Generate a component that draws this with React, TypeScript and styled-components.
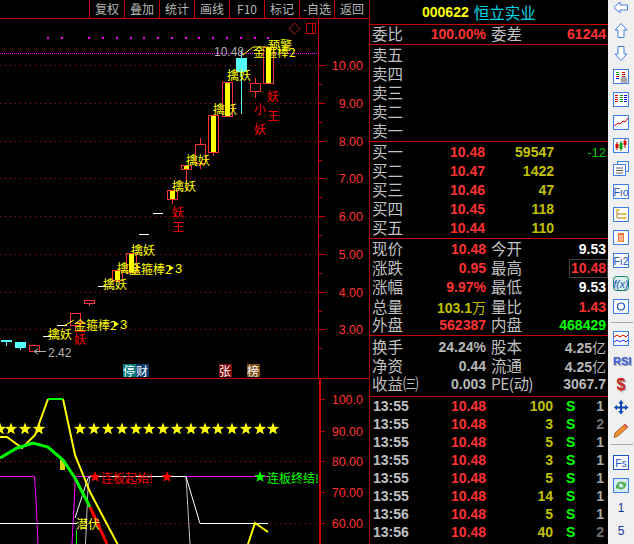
import React from 'react';
import styled, { createGlobalStyle } from 'styled-components';

const RED = '#ff3232';
const LINE = '#c80000';
const YELLOW = '#ffff00';
const CYAN = '#54ffff';
const GREEN = '#00ff00';
const MAGENTA = '#ff00ff';
const CJK = '"Noto Sans CJK SC", "Liberation Sans", sans-serif';
const NUM = '"Liberation Sans", "Noto Sans CJK SC", sans-serif';

const GlobalStyle = createGlobalStyle`
  html, body {
    margin: 0;
    padding: 0;
    background: #000;
    overflow: hidden;
  }
`;

const Screen = styled.div`
  display: flex;
  width: 634px;
  height: 544px;
  overflow: hidden;
  background: #000;
`;

/* ---------- left column ---------- */

const ChartColumn = styled.div`
  display: flex;
  flex-direction: column;
  width: 369px;
  flex: none;
`;

const Toolbar = styled.div`
  display: flex;
  justify-content: flex-end;
  height: 18px;
  flex: none;
  border-bottom: 1px solid ${LINE};
`;

const ToolButton = styled.div`
  width: 35px;
  box-sizing: border-box;
  border-left: 1px solid ${LINE};
  color: #b8b8b8;
  font: 12px/17px ${CJK};
  text-align: center;
  white-space: nowrap;
`;

const ChartSvg = styled.svg`
  display: block;
  flex: none;
`;

const MainSvg = styled(ChartSvg)`
  border-bottom: 1px solid ${LINE};
`;

const Label = styled.text<{ $color?: string; $size?: number; $num?: boolean }>`
  fill: ${(p) => p.$color || YELLOW};
  font-family: ${(p) => (p.$num ? NUM : CJK)};
  font-size: ${(p) => p.$size || 12}px;
  dominant-baseline: central;
`;

const Candle = ({ x, top, bottom, fill, wickTop, wickBottom }: any) => (
  <g shapeRendering="crispEdges">
    {(wickTop || wickBottom) && (
      <line
        x1={x + 5.5}
        x2={x + 5.5}
        y1={wickTop || top}
        y2={wickBottom || bottom}
        stroke={fill === CYAN ? CYAN : RED}
      />
    )}
    {fill === CYAN ? (
      <rect x={x} y={top} width={11} height={bottom - top} fill={CYAN} />
    ) : (
      <rect x={x + 0.5} y={top + 0.5} width={10} height={bottom - top - 1} fill="#000" stroke={RED} />
    )}
    {fill === YELLOW && <rect x={x + 3} y={top + 1} width={5} height={bottom - top - 2} fill={YELLOW} />}
  </g>
);

const candles = [
  { x: 263, top: 47, bottom: 84, fill: YELLOW },
  { x: 236, top: 58, bottom: 72, fill: CYAN, wickTop: 50, wickBottom: 114 },
  { x: 250, top: 83, bottom: 92, wickTop: 78, wickBottom: 98 },
  { x: 222, top: 82, bottom: 117, fill: YELLOW },
  { x: 208, top: 115, bottom: 153, fill: YELLOW, wickBottom: 156 },
  { x: 195, top: 144, bottom: 164, wickTop: 138, wickBottom: 169 },
  { x: 181, top: 165, bottom: 170, fill: YELLOW, wickBottom: 190 },
  { x: 167, top: 190, bottom: 200, fill: YELLOW, wickBottom: 204 },
  { x: 126, top: 253, bottom: 273, fill: YELLOW },
  { x: 112, top: 270, bottom: 281, fill: YELLOW },
  { x: 84, top: 300, bottom: 304, wickBottom: 306 },
  { x: 70, top: 313, bottom: 326, wickBottom: 330 },
  { x: 29, top: 345, bottom: 352 },
  { x: 15, top: 342, bottom: 348, fill: CYAN, wickBottom: 350 },
];

const dashes = [
  [153, 213],
  [139, 234],
  [98, 286],
  [57, 325],
  [43, 336],
];

const catchLabels = [
  [227, 74],
  [213, 108],
  [186, 159],
  [172, 185],
  [131, 249],
  [117, 267],
  [103, 283],
  [48, 333],
];

const redLabels: [string, number, number][] = [
  ['妖', 267, 95],
  ['王', 267, 115],
  ['小', 254, 108],
  ['妖', 254, 128],
  ['妖', 172, 211],
  ['王', 172, 226],
  ['王', 74, 326],
  ['妖', 74, 338],
];

const magentaDots = [48, 62, 89, 103, 117, 131, 144, 158, 172, 186, 199, 213, 227, 241, 255, 268];
const priceAxis: [string, number][] = [
  ['10.00', 65],
  ['9.00', 103],
  ['8.00', 141],
  ['7.00', 178],
  ['6.00', 216],
  ['5.00', 254],
  ['4.00', 292],
  ['3.00', 329],
];

const tagCells: [string, number, string][] = [
  ['停', 123, '#0a7a80'],
  ['财', 136, '#0c3a70'],
  ['张', 219, '#7a0808'],
  ['榜', 247, '#7a4a10'],
];

// "金箍棒2" + small arrow + "3", the way the chart overlays them
const RodLabel = ({ x, y }: { x: number; y: number }) => (
  <g>
    <Label x={x} y={y}>
      金箍棒2
    </Label>
    <polygon points={`${x + 40},${y - 3} ${x + 45},${y} ${x + 40},${y + 3}`} fill={YELLOW} />
    <Label x={x + 46} y={y} $num $size={13}>
      3
    </Label>
  </g>
);

const MainChart = () => (
  <MainSvg width={369} height={359} viewBox="0 19 369 359">
    <g shapeRendering="crispEdges">
      {priceAxis.map(([, y]) => (
        <g key={y}>
          <line x1={0} x2={318} y1={y + 0.5} y2={y + 0.5} stroke="#c01010" strokeDasharray="1 4" />
          <line x1={318} x2={325} y1={y + 0.5} y2={y + 0.5} stroke={LINE} />
          <line x1={318} x2={322} y1={y + 19.5} y2={y + 19.5} stroke={LINE} />
        </g>
      ))}
      <line x1={0} x2={318} y1={53.5} y2={53.5} stroke={MAGENTA} strokeDasharray="1 1" />
      <line x1={318.5} x2={318.5} y1={19} y2={378} stroke={LINE} />
      {magentaDots.map((x) => (
        <rect key={x} x={x - 1} y={37} width={2} height={2} fill={MAGENTA} />
      ))}
      <rect x={306.5} y={23.5} width={9} height={10} fill="none" stroke={LINE} />
      <line x1={312.5} x2={312.5} y1={23} y2={34} stroke={LINE} />
    </g>
    <polygon points="294.5,23 300,28.5 294.5,34 289,28.5" fill="none" stroke="#b02020" />

    {candles.map((c) => (
      <Candle key={c.x} {...c} />
    ))}
    <g shapeRendering="crispEdges">
      {dashes.map(([x, y]) => (
        <rect key={x} x={x} y={y} width={10} height={1} fill="#fff" />
      ))}
      <rect x={1} y={340} width={11} height={2} fill={CYAN} />
      <line x1={6.5} x2={6.5} y1={340} y2={346} stroke={CYAN} />
    </g>

    {catchLabels.map(([x, y]) => (
      <Label key={x} x={x} y={y}>
        擒妖
      </Label>
    ))}
    {redLabels.map(([t, x, y]) => (
      <Label key={`${t}${y}`} x={x} y={y} $color="#ff0000">
        {t}
      </Label>
    ))}

    <Label x={214} y={52} $color="#b0b0b0" $size={12} $num>
      10.48
    </Label>
    <polyline points="243,55 253,47 266,47" fill="none" stroke={YELLOW} />
    <Label x={253} y={51}>
      金箍棒2
    </Label>
    <Label x={268} y={44}>
      预警
    </Label>
    <RodLabel x={129} y={268} />
    <polyline points="64,326 74,320" fill="none" stroke={YELLOW} />
    <RodLabel x={74} y={324} />
    <line x1={34} x2={46} y1={351.5} y2={351.5} stroke="#b0b0b0" shapeRendering="crispEdges" />
    <polyline points="38,349 34,351.5 38,354" fill="none" stroke="#b0b0b0" />
    <Label x={48} y={353} $color="#b0b0b0" $num>
      2.42
    </Label>

    {tagCells.map(([t, x, bg]) => (
      <g key={t}>
        <rect x={x} y={364} width={13} height={13} fill={bg} shapeRendering="crispEdges" />
        <Label x={x} y={370.5} $color="#fff">
          {t}
        </Label>
      </g>
    ))}

    {priceAxis.map(([t, y]) => (
      <Label key={t} x={363} y={y + 1} $color={RED} $size={12.5} $num textAnchor="end">
        {t}
      </Label>
    ))}
  </MainSvg>
);

const starPath = (cx: number, cy: number, r: number) => {
  const pts = [];
  for (let i = 0; i < 10; i++) {
    const rad = i % 2 ? r * 0.42 : r;
    const a = (Math.PI / 5) * i - Math.PI / 2;
    pts.push(`${cx + rad * Math.cos(a)},${cy + rad * Math.sin(a)}`);
  }
  return pts.join(' ');
};

const starRow = [0, 11, 25, 39, 80, 94, 108, 122, 136, 149, 163, 177, 191, 205, 218, 232, 246, 260, 273];
const subAxis: [string, number][] = [
  ['100.0', 399],
  ['90.00', 431],
  ['80.00', 461],
  ['70.00', 492],
  ['60.00', 523],
];

const SubChart = () => (
  <ChartSvg width={369} height={165} viewBox="0 379 369 165">
    <defs>
      <clipPath id="subPlot">
        <rect x={0} y={379} width={318} height={165} />
      </clipPath>
    </defs>
    <g shapeRendering="crispEdges">
      <line x1={0} x2={318} y1={461.5} y2={461.5} stroke="#c01010" strokeDasharray="1 4" />
      <line x1={0} x2={318} y1={523.5} y2={523.5} stroke="#c01010" strokeDasharray="1 4" />
      {subAxis.map(([, y]) => (
        <line key={y} x1={319} x2={325} y1={y + 0.5} y2={y + 0.5} stroke={LINE} />
      ))}
      <rect x={319} y={379} width={2} height={165} fill={LINE} />
    </g>
    <g clipPath="url(#subPlot)" fill="none">
      <polyline points="0,476.5 34.5,476.5 36,500 38,544" stroke={MAGENTA} />
      <polyline points="72,544 75,486 75,476.5 268,476.5" stroke={MAGENTA} />
      <polyline points="85.5,544 88,488 90,476.5" stroke="#c0c0c0" />
      <polyline points="186,476.5 190,544" stroke="#c0c0c0" />
      <polyline points="75,518 88,478 90,476.5 186,476.5 200,523.5 268,523.5" stroke="#fff" />
      <polyline points="0,523.5 77,523.5" stroke="#fff" />
      <line x1={76.5} x2={76.5} y1={530} y2={544} stroke={GREEN} />
      <rect x={60} y={460} width={5} height={10} fill="#d8d800" shapeRendering="crispEdges" />
      <polyline points="0,437 7,437 22,448 35,435 48,399" stroke={YELLOW} strokeWidth={2} />
      <polyline points="63,399 75,455 90,492 118,545" stroke={YELLOW} strokeWidth={2} />
      <polyline points="48,399 63,399" stroke={GREEN} strokeWidth={2} />
      <polyline points="0,458 17,448 33,443 48,447 63,460 75,478 90,507" stroke={GREEN} strokeWidth={3} />
      <polyline points="90,507 107,544" stroke="#ff0000" strokeWidth={3} />
      <polyline points="248,544 255,523 268,532" stroke={YELLOW} strokeWidth={2} />
      {starRow.map((x) => (
        <polygon key={x} points={starPath(x, 429, 6.5)} fill={YELLOW} />
      ))}
      <polygon points={starPath(95, 477, 6)} fill="#ff0000" />
      <Label x={101} y={477} $color="#ff0000">
        连板起始!
      </Label>
      <polygon points={starPath(167, 477, 6)} fill="#ff0000" />
      <polygon points={starPath(260, 477, 6)} fill={GREEN} />
      <Label x={267} y={477} $color={GREEN}>
        连板终结!
      </Label>
      <Label x={76} y={523}>
        潜伏
      </Label>
    </g>
    {subAxis.map(([t, y]) => (
      <Label key={t} x={363} y={y + 1} $color={RED} $size={12.5} $num textAnchor="end">
        {t}
      </Label>
    ))}
  </ChartSvg>
);

/* ---------- quote panel ---------- */

const QuotePanel = styled.div`
  width: 239px;
  flex: none;
  box-sizing: border-box;
  border-left: 1px solid #a00000;
  display: flex;
  flex-direction: column;
  overflow: hidden;
`;

const Block = styled.div<{ $height: number; $flush?: boolean }>`
  height: ${(p) => p.$height}px;
  flex: none;
  box-sizing: border-box;
  padding-top: ${(p) => (p.$flush ? 0 : 1)}px;
  border-bottom: 1px solid ${LINE};
`;

const TitleBar = styled.div`
  height: 25px;
  flex: none;
  box-sizing: border-box;
  border-bottom: 1px solid ${LINE};
  display: flex;
  align-items: center;
  gap: 5px;
  padding-left: 52px;
`;

const StockCode = styled.span`
  color: ${YELLOW};
  font: bold 14px ${NUM};
`;

const StockName = styled.span`
  color: #00d8e8;
  font: 15.5px ${CJK};
`;

const QuoteRow = styled.div`
  display: grid;
  grid-template-columns: 32px 82px 5px 32px 1fr;
  align-items: center;
  height: 19px;
  padding: 0 2px;
`;

const BookRow = styled.div`
  display: grid;
  grid-template-columns: 32px 81px 69px 1fr;
  align-items: center;
  height: 19px;
  padding: 0 2px;
`;

const Caption = styled.span<{ $tight?: boolean }>`
  color: #c0c0c0;
  font: 15.5px/16px ${CJK};
  padding-bottom: 3px;
  white-space: nowrap;
  ${(p) => p.$tight && 'letter-spacing: -0.6px;'}
`;

const Value = styled.span<{ $color?: string; $boxed?: boolean; $thin?: boolean }>`
  color: ${(p) => p.$color || '#fff'};
  font: ${(p) => (p.$thin ? 'normal 13px' : 'bold 14px')}/17px ${NUM};
  justify-self: end;
  white-space: nowrap;
  ${(p) => p.$boxed && 'border: 1px solid #404040; padding: 0 1px; margin-right: -2px;'}
`;

const Unit = styled.span`
  font: 14px ${CJK};
`;

const TickList = styled.div`
  flex: 1;
  border-left: 1px solid #c80000;
  margin-left: -1px;
`;

const TickRow = styled.div`
  display: grid;
  grid-template-columns: 34px 79px 67px 21px 1fr;
  align-items: center;
  height: 18px;
  padding: 0 4px 0 3px;
`;

const TickTime = styled.span`
  color: #c0c0c0;
  font: bold 14px/17px ${NUM};
`;

const TickSide = styled.span`
  color: ${GREEN};
  font: bold 14px/17px ${NUM};
  padding-left: 13px;
`;

const sellRows = ['卖五', '卖四', '卖三', '卖二', '卖一'];
const buyRows = [
  ['买一', '10.48', '59547', '-12'],
  ['买二', '10.47', '1422', ''],
  ['买三', '10.46', '47', ''],
  ['买四', '10.45', '118', ''],
  ['买五', '10.44', '110', ''],
];
const DIM = '#c0c000';
const GREY = '#b8b8b8';
const ticks = [
  ['13:55', '100', '1'],
  ['13:55', '3', '2'],
  ['13:55', '5', '1'],
  ['13:55', '3', '1'],
  ['13:55', '5', '1'],
  ['13:55', '14', '1'],
  ['13:56', '5', '1'],
  ['13:56', '40', '2'],
];

const QuoteBoard = () => (
  <QuotePanel>
    <TitleBar>
      <StockCode>000622</StockCode>
      <StockName>恒立实业</StockName>
    </TitleBar>
    <Block $height={20} $flush>
      <QuoteRow>
        <Caption>委比</Caption>
        <Value $color={RED}>100.00%</Value>
        <span />
        <Caption>委差</Caption>
        <Value $color={RED}>61244</Value>
      </QuoteRow>
    </Block>
    <Block $height={97}>
      {sellRows.map((t) => (
        <BookRow key={t}>
          <Caption>{t}</Caption>
        </BookRow>
      ))}
    </Block>
    <Block $height={97}>
      {buyRows.map(([t, price, vol, delta]) => (
        <BookRow key={t}>
          <Caption>{t}</Caption>
          <Value $color={RED}>{price}</Value>
          <Value $color={DIM}>{vol}</Value>
          <Value $color="#00c800" $thin>
            {delta}
          </Value>
        </BookRow>
      ))}
    </Block>
    <Block $height={97}>
      <QuoteRow>
        <Caption>现价</Caption>
        <Value $color={RED}>10.48</Value>
        <span />
        <Caption>今开</Caption>
        <Value>9.53</Value>
      </QuoteRow>
      <QuoteRow>
        <Caption>涨跌</Caption>
        <Value $color={RED}>0.95</Value>
        <span />
        <Caption>最高</Caption>
        <Value $color={RED} $boxed>
          10.48
        </Value>
      </QuoteRow>
      <QuoteRow>
        <Caption>涨幅</Caption>
        <Value $color={RED}>9.97%</Value>
        <span />
        <Caption>最低</Caption>
        <Value>9.53</Value>
      </QuoteRow>
      <QuoteRow>
        <Caption>总量</Caption>
        <Value $color={DIM}>
          103.1<Unit>万</Unit>
        </Value>
        <span />
        <Caption>量比</Caption>
        <Value $color={RED}>1.43</Value>
      </QuoteRow>
      <QuoteRow>
        <Caption>外盘</Caption>
        <Value $color={RED}>562387</Value>
        <span />
        <Caption>内盘</Caption>
        <Value $color={GREEN}>468429</Value>
      </QuoteRow>
    </Block>
    <Block $height={61}>
      <QuoteRow>
        <Caption>换手</Caption>
        <Value $color={GREY}>24.24%</Value>
        <span />
        <Caption>股本</Caption>
        <Value $color={GREY}>
          4.25<Unit>亿</Unit>
        </Value>
      </QuoteRow>
      <QuoteRow>
        <Caption>净资</Caption>
        <Value $color={GREY}>0.44</Value>
        <span />
        <Caption>流通</Caption>
        <Value $color={GREY}>
          4.25<Unit>亿</Unit>
        </Value>
      </QuoteRow>
      <QuoteRow>
        <Caption>收益㈢</Caption>
        <Value $color={GREY}>0.003</Value>
        <span />
        <Caption $tight>PE(动)</Caption>
        <Value $color={GREY}>3067.7</Value>
      </QuoteRow>
    </Block>
    <TickList>
      {ticks.map(([time, vol, count], i) => (
        <TickRow key={i}>
          <TickTime>{time}</TickTime>
          <Value $color={RED}>10.48</Value>
          <Value $color={DIM}>{vol}</Value>
          <TickSide>S</TickSide>
          <Value $color={count === '1' ? '#a8a8a8' : '#707070'}>{count}</Value>
        </TickRow>
      ))}
    </TickList>
  </QuotePanel>
);

/* ---------- side toolbar ---------- */

const SideBar = styled.div`
  flex: 1;
  background: #f0f0f0;
  box-sizing: border-box;
  padding-left: 5px;
  display: flex;
  flex-direction: column;
  gap: 8px;
`;

const IconSvg = styled.svg`
  display: block;
  width: 16px;
  height: 15px;
  flex: none;
`;

const Divider = styled.div<{ $lift?: number }>`
  height: 1px;
  flex: none;
  width: 22px;
  margin: ${(p) => -(p.$lift || 0)}px 0 ${(p) => p.$lift || 0}px -2px;
  background: #a8a8a8;
`;

const GlyphSlot = styled.div<{ $color: string; $size: number }>`
  height: 15px;
  width: 16px;
  flex: none;
  text-align: center;
  color: ${(p) => p.$color};
  font: bold ${(p) => p.$size}px/15px ${NUM};
  text-shadow: 1px 1px 0 #a0a0a0;
`;

const NumberSlot = styled.div`
  height: 15px;
  width: 16px;
  flex: none;
  text-align: center;
  color: #0a3a9a;
  font: 12px/15px ${NUM};
`;

const BLUE = '#3f7fe8';

const IconText = styled.text<{ $italic?: boolean }>`
  fill: #1a50c0;
  font: ${(p) => (p.$italic ? 'italic ' : '')}10.5px ${NUM};
  dominant-baseline: central;
  text-anchor: middle;
`;

const Arrow = ({ points }: { points: string }) => (
  <IconSvg viewBox="0 0 16 15">
    <polygon points={points} fill="#fff" stroke={BLUE} strokeWidth={1} />
  </IconSvg>
);

const Framed = ({ children, color = BLUE, fill = '#fff' }: any) => (
  <IconSvg viewBox="0 0 16 15">
    <rect x={0.5} y={0.5} width={15} height={14} fill={fill} stroke={color} strokeWidth={1} shapeRendering="crispEdges" />
    {children}
  </IconSvg>
);

const Bars = ({ x, colors }: { x: number; colors: string[] }) => (
  <g shapeRendering="crispEdges">
    {colors.map((c, i) => (
      <rect key={i} x={x} y={3 + i * 2} width={3} height={1} fill={c} />
    ))}
  </g>
);

const Side = () => (
  <SideBar>
    <Arrow points="1,7.5 7,2 7,5 14.5,5 14.5,10 7,10 7,13" />
    <Arrow points="8,0.5 14,7 11,7 11,14.5 5,14.5 5,7 2,7" />
    <Arrow points="5,0.5 11,0.5 11,8 14,8 8,14.5 2,8 5,8" />
    <Framed>
      <Bars x={3} colors={['#00a000', '#00a000', '#e00000', '#0000e0']} />
      <Bars x={9} colors={['#e00000', '#e00000', '#e00000', '#e00000']} />
      <circle cx={11} cy={11} r={3.5} fill="#a8a8a8" />
    </Framed>
    <Framed>
      <Bars x={2} colors={['#e00000', '#e00000', '#e00000', '#e00000']} />
      <Bars x={6.5} colors={['#00a000', '#00a000', '#00a000', '#00a000']} />
      <Bars x={11} colors={['#0000e0', '#0000e0', '#0000e0', '#0000e0']} />
    </Framed>
    <Framed>
      <polyline points="1,11 5,8 7,9 10,6 12,7 15,3" fill="none" stroke="#e00000" />
    </Framed>
    <Framed>
      <line x1={4} x2={4} y1={4} y2={12} stroke="#800" />
      <rect x={2.5} y={6} width={3} height={4} fill="#e00000" />
      <line x1={8} x2={8} y1={3} y2={13} stroke="#060" />
      <rect x={6.5} y={5} width={3} height={6} fill="#00a000" />
      <line x1={12} x2={12} y1={1} y2={10} stroke="#800" />
      <rect x={10.5} y={3} width={3} height={4} fill="#e00000" />
    </Framed>
    <IconSvg viewBox="0 0 16 15">
      <rect x={4.5} y={0.5} width={11} height={10} fill="#fff" stroke={BLUE} />
      <rect x={0.5} y={3.5} width={12} height={11} fill="#fff" stroke={BLUE} />
      <path d="M3 7h7M3 9.5h7M3 12h7" stroke="#666" />
    </IconSvg>
    <Framed>
      <IconText x={8} y={8}>
        Fıo
      </IconText>
    </Framed>
    <Framed>
      <path d="M4 3v8h5M4 7h5" fill="none" stroke="#a08020" />
      <rect x={2.5} y={2} width={4} height={2} fill="#f0c040" />
      <rect x={8.5} y={6} width={5} height={2} fill="#f0c040" />
      <rect x={8.5} y={10} width={5} height={2} fill="#f0c040" />
    </Framed>
    <Framed>
      <path d="M5 3h6v9H5z" fill="#f07830" />
      <path d="M6 6h4M6 8h4M6 10h4" stroke="#fff" />
    </Framed>
    <Framed>
      <IconText x={8} y={8}>
        Fı2
      </IconText>
    </Framed>
    <IconSvg viewBox="0 0 16 15">
      <rect x={0.5} y={0.5} width={15} height={14} rx={3} fill="#d8f0e8" stroke="#108070" />
      <IconText x={8} y={7.5} $italic>
        f(x)
      </IconText>
    </IconSvg>
    <Framed>
      <circle cx={8} cy={7.5} r={3.5} fill="none" stroke="#1a50c0" strokeWidth={1.2} />
    </Framed>
    <Divider />
    <Framed>
      <polyline points="1,6 4,4 7,6 10,4 13,6 15,4" fill="none" stroke="#e00000" />
      <polyline points="1,11 4,9 7,11 10,9 13,11 15,9" fill="none" stroke="#2020e0" />
    </Framed>
    <GlyphSlot $color="#3a5ae0" $size={11}>
      RSI
    </GlyphSlot>
    <GlyphSlot $color="#d02020" $size={16}>
      $
    </GlyphSlot>
    <IconSvg viewBox="0 0 16 15">
      <path d="M7 3.5h2v3h3v-1.8l3.5 2.8-3.5 2.8v-1.8h-3v2.5h1.8l-2.8 3.5-2.8-3.5h1.8v-2.5h-3v1.8l-3-2.8 3-2.8v1.8h3v-3h-1.8l2.8-3.5 2.8 3.5z" fill="#0a48b8" />
    </IconSvg>
    <IconSvg viewBox="0 0 16 15">
      <polygon points="12,1 15,4 5,13 1,14.5 2,10" fill="#f09030" stroke="#804010" strokeWidth={0.7} />
      <polygon points="12,1 15,4 13.5,5.5 10.5,2.5" fill="#e06060" />
    </IconSvg>
    <Divider $lift={2} />
    <Framed color="#1a50c0">
      <IconText x={8} y={8}>
        Fs
      </IconText>
    </Framed>
    <Framed fill="#d8ecf8">
      <path d="M3.5 7a4.5 4 0 0 1 8-2l1.5-1v4h-4l1.3-1A3 3 0 0 0 5 7z" fill="#50b050" />
      <path d="M12.5 8a4.5 4 0 0 1-8 2l-1.5 1v-4h4l-1.3 1a3 3 0 0 0 5.3 0z" fill="#50b050" />
    </Framed>
    <NumberSlot>1</NumberSlot>
    <NumberSlot>5</NumberSlot>
  </SideBar>
);

const toolLabels = ['复权', '叠加', '统计', '画线', 'F10', '标记', '-自选', '返回'];

const App = () => (
  <>
    <GlobalStyle />
    <Screen>
      <ChartColumn>
        <Toolbar>
          {toolLabels.map((t) => (
            <ToolButton key={t}>{t}</ToolButton>
          ))}
        </Toolbar>
        <MainChart />
        <SubChart />
      </ChartColumn>
      <QuoteBoard />
      <Side />
    </Screen>
  </>
);

export default App;
